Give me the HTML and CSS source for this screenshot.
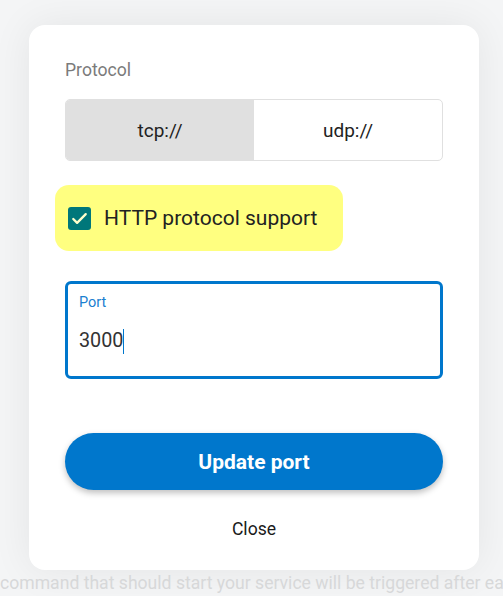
FILE: index.html
```html
<!DOCTYPE html>
<html>
<head>
<meta charset="utf-8">
<link rel="stylesheet" href="styles.css">
</head>
<body>
<div class="page">
  <div class="card">
    <div class="label">Protocol</div>
    <div class="segmented">
      <div class="seg active">tcp://</div>
      <div class="seg">udp://</div>
    </div>
    <div class="highlight">
      <span class="checkbox">
        <svg viewBox="0 0 24 24" width="23" height="23"><path d="M5.5 12.5l4 4 9-9" fill="none" stroke="#ffffcc" stroke-width="2.4" stroke-linecap="round" stroke-linejoin="round"/></svg>
      </span>
      <span class="check-text">HTTP protocol support</span>
    </div>
    <div class="field">
      <div class="field-label">Port</div>
      <div class="field-value">3000<span class="caret"></span></div>
    </div>
    <button class="primary">Update port</button>
    <div class="close">Close</div>
  </div>
  <div class="bg-text">command that should start your service will be triggered after ea</div>
</div>
</body>
</html>
```

FILE: styles.css
```css
html, body {
  margin: 0;
  padding: 0;
  height: 100%;
  overflow: hidden;
}
body {
  background: #f4f5f6;
  font-family: Roboto, "Noto Sans", sans-serif;
}
.page {
  padding-top: 25px;
  display: flex;
  flex-direction: column;
}
.card {
  margin-left: 29px;
  width: 450px;
  height: 545px;
  box-sizing: border-box;
  background: #fff;
  border-radius: 16px;
  box-shadow: 0 0 40px rgba(0,0,0,0.07);
  padding: 33px 36px 0 36px;
  display: flex;
  flex-direction: column;
}
.label {
  font-size: 17.6px;
  line-height: 24px;
  color: #7b7b7b;
}
.segmented {
  margin-top: 17px;
  height: 62px;
  box-sizing: border-box;
  border: 1px solid #e0e0e0;
  border-radius: 5px;
  display: flex;
  overflow: hidden;
}
.seg {
  flex: 1;
  display: flex;
  align-items: center;
  justify-content: center;
  font-size: 19px;
  color: #222;
}
.seg.active {
  background: #e0e0e0;
}
.highlight {
  margin-top: 24px;
  margin-left: -10px;
  width: 288px;
  height: 66px;
  box-sizing: border-box;
  background: #ffff80;
  border-radius: 14px;
  display: flex;
  align-items: center;
  padding-left: 13px;
  gap: 13px;
}
.checkbox {
  width: 23px;
  height: 23px;
  background: #00777a;
  border-radius: 3px;
  display: flex;
}
.check-text {
  font-size: 21px;
  color: #222;
}
.field {
  margin-top: 30px;
  height: 98px;
  box-sizing: border-box;
  border: 3px solid #0077cc;
  border-radius: 6px;
  padding: 9px 11px;
}
.field-label {
  font-size: 14.5px;
  line-height: 20px;
  color: #1a80d0;
}
.field-value {
  margin-top: 15px;
  font-size: 19.8px;
  line-height: 26px;
  color: #333;
  display: flex;
  align-items: center;
}
.caret {
  display: inline-block;
  width: 1px;
  height: 25px;
  background: #0077cc;
}
.primary {
  margin-top: 54px;
  height: 57px;
  border: none;
  border-radius: 29px;
  background: #0077cc;
  color: #fff;
  font-family: Roboto, "Noto Sans", sans-serif;
  font-weight: 700;
  font-size: 21px;
  box-shadow: 0 3px 6px rgba(0,0,0,0.25);
}
.close {
  margin-top: 26px;
  text-align: center;
  font-size: 17.6px;
  font-weight: 400;
  line-height: 26px;
  color: #1a1a1a;
}
.bg-text {
  margin-top: 1px;
  white-space: nowrap;
  overflow: hidden;
  font-size: 17.6px;
  line-height: 24px;
  color: #d7d8d9;
}
```
